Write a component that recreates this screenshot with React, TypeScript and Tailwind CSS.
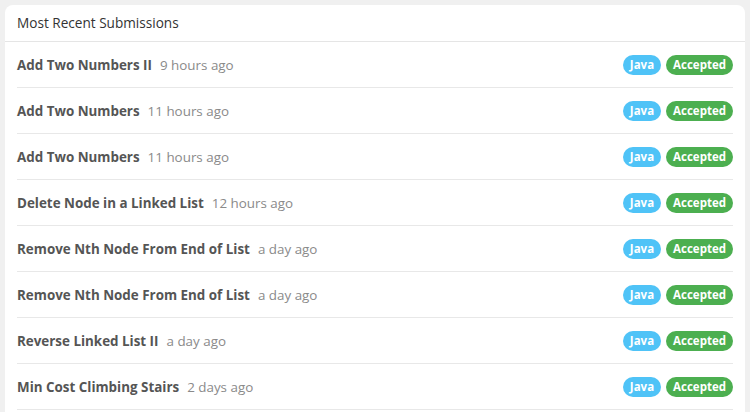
const submissions = [
  { title: "Add Two Numbers II", time: "9 hours ago" },
  { title: "Add Two Numbers", time: "11 hours ago" },
  { title: "Add Two Numbers", time: "11 hours ago" },
  { title: "Delete Node in a Linked List", time: "12 hours ago" },
  { title: "Remove Nth Node From End of List", time: "a day ago" },
  { title: "Remove Nth Node From End of List", time: "a day ago" },
  { title: "Reverse Linked List II", time: "a day ago" },
  { title: "Min Cost Climbing Stairs", time: "2 days ago" },
];

export default function App() {
  return (
    <div
      className="h-[412px] overflow-hidden bg-[#f0f0f0] px-[5px] pt-[5px]"
      style={{ fontFamily: '"Open Sans", "Liberation Sans", sans-serif' }}
    >
      <div className="h-[420px] rounded-lg bg-white">
        <div className="flex h-[37px] items-center border-b border-[#e5e5e5] px-3 pt-[1px] text-[13.6px] text-[#333]">
          Most Recent Submissions
        </div>
        <div className="px-3">
          {submissions.map((s, i) => (
            <div
              key={i}
              className="flex h-[46px] items-center justify-between border-b border-[#e8e8e8] pt-[1px]"
            >
              <div className="flex items-baseline gap-2">
                <span className="text-[13.4px] font-bold text-[#555]">{s.title}</span>
                <span className="text-[13.4px] text-[#8a8a8a]">{s.time}</span>
              </div>
              <div className="flex items-center gap-[5px]">
                <span className="rounded-full bg-[#4fc3f7] px-[7px] py-[1px] text-[11.5px] font-bold text-white">
                  Java
                </span>
                <span className="rounded-full bg-[#4caf50] px-[7px] py-[1px] text-[11.5px] font-bold text-white">
                  Accepted
                </span>
              </div>
            </div>
          ))}
        </div>
      </div>
    </div>
  );
}
